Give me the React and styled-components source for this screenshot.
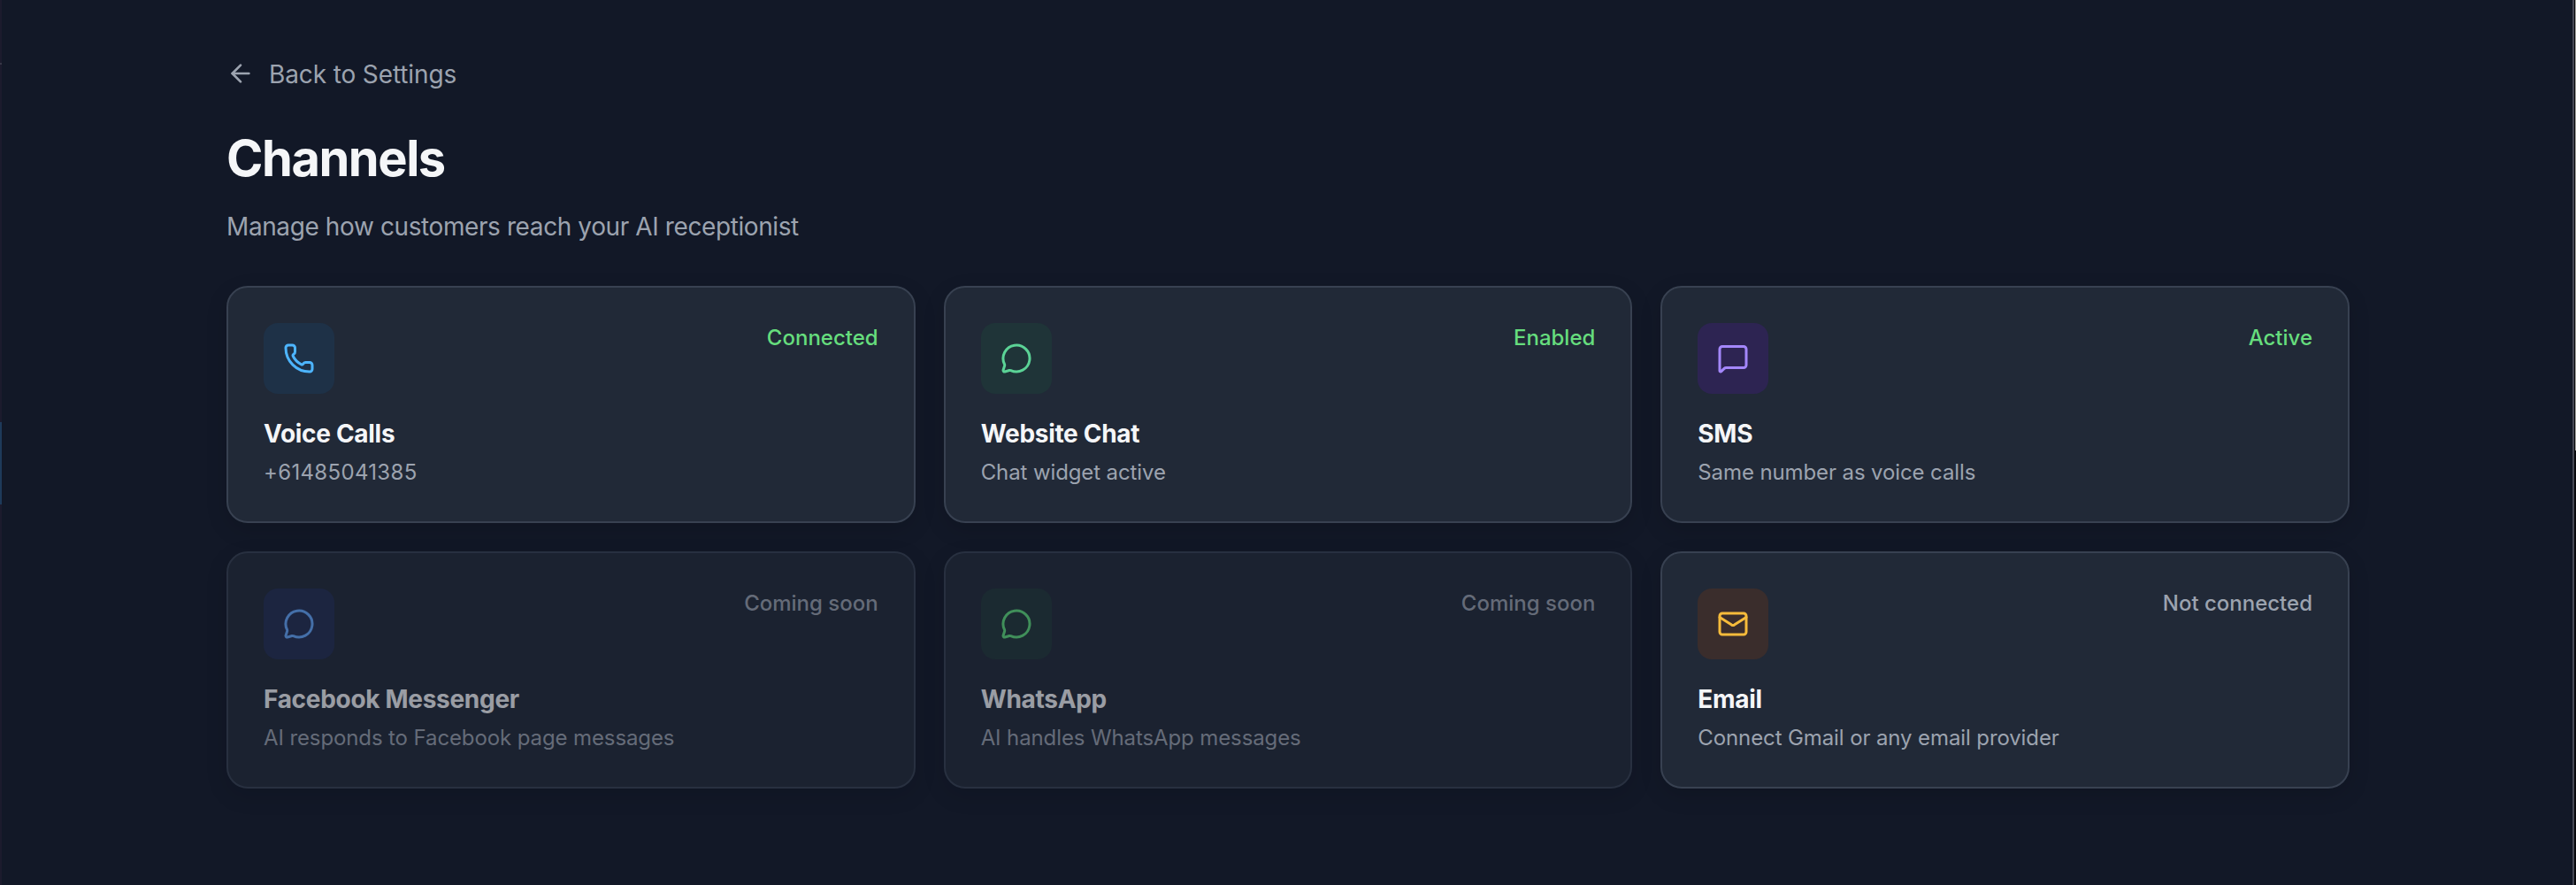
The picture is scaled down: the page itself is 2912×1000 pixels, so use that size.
import React from "react";
import styled, { createGlobalStyle } from "styled-components";
import {
  ArrowLeft,
  Mail,
  MessageCircle,
  MessageSquare,
  Phone,
} from "lucide-react";

const channels = [
  {
    name: "Voice Calls",
    detail: "+61485041385",
    status: "Connected",
    live: true,
    numeric: true,
    icon: Phone,
    color: "#4db5ff",
    tint: "#1e3147",
  },
  {
    name: "Website Chat",
    detail: "Chat widget active",
    status: "Enabled",
    live: true,
    icon: MessageCircle,
    color: "#5bd396",
    tint: "#1f3438",
  },
  {
    name: "SMS",
    detail: "Same number as voice calls",
    status: "Active",
    live: true,
    icon: MessageSquare,
    color: "#a487fb",
    tint: "#2d2452",
  },
  {
    name: "Facebook Messenger",
    detail: "AI responds to Facebook page messages",
    status: "Coming soon",
    soon: true,
    icon: MessageCircle,
    color: "#66a9ff",
    tint: "#232e51",
  },
  {
    name: "WhatsApp",
    detail: "AI handles WhatsApp messages",
    status: "Coming soon",
    soon: true,
    icon: MessageCircle,
    color: "#5fdf7c",
    tint: "#213638",
  },
  {
    name: "Email",
    detail: "Connect Gmail or any email provider",
    status: "Not connected",
    icon: Mail,
    color: "#f6bb3b",
    tint: "#3a2d2c",
  },
];

function App() {
  return (
    <>
      <GlobalStyle />
      <Shell>
        <Sidebar>
          <SidebarDivider />
          <ActiveItem />
        </Sidebar>
        <Main>
          <Content>
            <BackLink>
              <ArrowLeft size={32} strokeWidth={2} />
              <span>Back to Settings</span>
            </BackLink>
            <Title>Channels</Title>
            <Subtitle>Manage how customers reach your AI receptionist</Subtitle>
            <Grid>
              {channels.map((channel) => (
                <ChannelCard key={channel.name} {...channel} />
              ))}
            </Grid>
          </Content>
        </Main>
        <ScrollTrack>
          <ScrollThumb />
        </ScrollTrack>
      </Shell>
    </>
  );
}

function ChannelCard({
  name,
  detail,
  status,
  live,
  soon,
  numeric,
  icon: Icon,
  color,
  tint,
}) {
  return (
    <Card $soon={soon}>
      <CardTop>
        <IconBox $color={color} $tint={tint}>
          <Icon size={36} strokeWidth={2} />
        </IconBox>
        <Status $live={live}>{status}</Status>
      </CardTop>
      <Name>{name}</Name>
      <Detail $numeric={numeric}>{detail}</Detail>
    </Card>
  );
}

const GlobalStyle = createGlobalStyle`
  * {
    margin: 0;
    padding: 0;
    box-sizing: border-box;
  }
  body {
    background: #121827;
    color: #f5f6f8;
    font-family: "Inter", sans-serif;
    overflow: hidden;
  }
`;

const Shell = styled.div`
  display: flex;
  height: 1000px;
`;

const Sidebar = styled.aside`
  width: 2px;
  padding-top: 71px;
  background: #1c1b2d;
`;

const SidebarDivider = styled.div`
  height: 2px;
  background: #373747;
`;

const ActiveItem = styled.div`
  height: 93px;
  margin-top: 404px;
  background: #1e3a5a;
`;

const Main = styled.main`
  flex: 1;
  padding: 64px 252px 0 254px;
`;

const Content = styled.div`
  width: 2400px;
`;

const BackLink = styled.a`
  display: flex;
  align-items: center;
  gap: 16px;
  height: 40px;
  color: #9ca3af;
  font-size: 28px;
  letter-spacing: -0.12px;
  svg {
    margin-bottom: 2px;
  }
`;

const Title = styled.h1`
  margin-top: 40px;
  font-size: 56px;
  font-weight: 700;
  line-height: 70px;
  letter-spacing: -0.026em;
`;

const Subtitle = styled.p`
  margin-top: 21px;
  color: #9ca3af;
  font-size: 28px;
  line-height: 42px;
  letter-spacing: -0.4px;
`;

const Grid = styled.div`
  display: grid;
  grid-template-columns: repeat(3, 1fr);
  gap: 32px;
  margin-top: 46px;
`;

const Card = styled.article`
  height: 268px;
  padding: 40px;
  border: 2px solid #384151;
  border-radius: 24px;
  background: #212937;
  box-shadow: 0 8px 24px rgba(0, 0, 0, 0.13);
  opacity: ${({ $soon }) => ($soon ? 0.6 : 1)};
`;

const CardTop = styled.div`
  display: flex;
  align-items: flex-start;
  justify-content: space-between;
`;

const IconBox = styled.div`
  display: flex;
  align-items: center;
  justify-content: center;
  width: 80px;
  height: 80px;
  border-radius: 16px;
  color: ${({ $color }) => $color};
  background: ${({ $tint }) => $tint};
`;

const Status = styled.span`
  color: ${({ $live }) => ($live ? "#66dd7d" : "#9ca3af")};
  font-size: 24px;
  font-weight: 500;
  line-height: 34px;
`;

const Name = styled.h2`
  margin-top: 24px;
  font-size: 28px;
  font-weight: 650;
  line-height: 42px;
  letter-spacing: -0.3px;
`;

const Detail = styled.p`
  margin-top: 5px;
  color: #9ca3af;
  font-size: 24px;
  line-height: 36px;
  letter-spacing: ${({ $numeric }) => ($numeric ? "0.33px" : "-0.11px")};
`;

const ScrollTrack = styled.div`
  width: 4px;
  padding-left: 1px;
  border-left: 2px solid #454753;
  background: #08090d;
`;

const ScrollThumb = styled.div`
  height: 509px;
  background: #a3a39f;
`;

export default App;
